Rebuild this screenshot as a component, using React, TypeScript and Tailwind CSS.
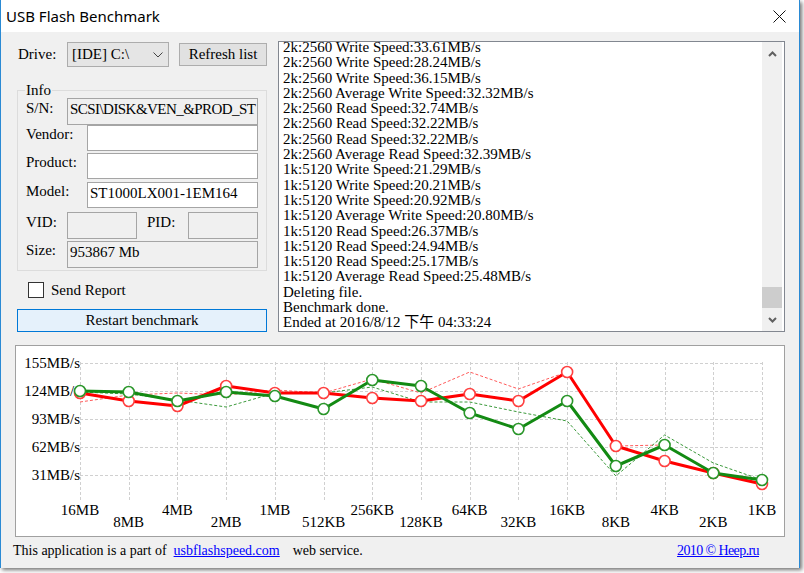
import React from "react";

const xs = Array.from({ length: 15 }, (_, i) => 80 + (i * 682) / 14);
const xLabels = ["16MB", "8MB", "4MB", "2MB", "1MB", "512KB", "256KB", "128KB", "64KB", "32KB", "16KB", "8KB", "4KB", "2KB", "1KB"];
const yTicks = [155, 124, 93, 62, 31];
const yOf = (v: number) => 503 - v * (140 / 155);

// pixel y of each point, read off the screenshot
const redSolid = [393, 401, 406, 386, 393, 393, 398, 401, 394, 401, 372, 446, 461, 473, 484];
const greenSolid = [391, 392, 401, 392, 396, 409, 380, 386, 413, 429, 401, 466, 445, 473, 480];
const redDash = [402, 395, 393, 395, 390, 393, 379, 393, 372, 389, 372, 446, 445, 473, 484];
const greenDash = [392, 394, 400, 407, 393, 393, 387, 402, 402, 412, 421, 476, 435, 463, 480];

const logLines = [
  "2k:2560 Write Speed:33.61MB/s",
  "2k:2560 Write Speed:28.24MB/s",
  "2k:2560 Write Speed:36.15MB/s",
  "2k:2560 Average Write Speed:32.32MB/s",
  "2k:2560 Read Speed:32.74MB/s",
  "2k:2560 Read Speed:32.22MB/s",
  "2k:2560 Read Speed:32.22MB/s",
  "2k:2560 Average Read Speed:32.39MB/s",
  "1k:5120 Write Speed:21.29MB/s",
  "1k:5120 Write Speed:20.21MB/s",
  "1k:5120 Write Speed:20.92MB/s",
  "1k:5120 Average Write Speed:20.80MB/s",
  "1k:5120 Read Speed:26.37MB/s",
  "1k:5120 Read Speed:24.94MB/s",
  "1k:5120 Read Speed:25.17MB/s",
  "1k:5120 Average Read Speed:25.48MB/s",
  "Deleting file.",
  "Benchmark done.",
  "Ended at 2016/8/12 下午 04:33:24",
];

function Chart() {
  const pts = (ys: number[]) => ys.map((y, i) => `${xs[i]},${y}`).join(" ");
  return (
    <svg width={768} height={190} viewBox="16 346 768 190" className="block">
      <rect x={16} y={346} width={768} height={190} fill="#ffffff" />
      {xs.map((x, i) => (
        <line key={i} x1={Math.round(x) + 0.5} x2={Math.round(x) + 0.5} y1={362} y2={502} stroke="#d0d0d0" strokeDasharray="3 2" />
      ))}
      {yTicks.map((v) => (
        <line key={v} x1={80} x2={762} y1={Math.round(yOf(v)) + 0.5} y2={Math.round(yOf(v)) + 0.5} stroke="#d0d0d0" strokeDasharray="3 2" />
      ))}
      {yTicks.map((v) => (
        <text key={v} x={80} y={yOf(v) + 5} textAnchor="end" fontFamily="'Liberation Serif', serif" fontSize={15} fill="#000">
          {v}MB/s
        </text>
      ))}
      {xLabels.map((l, i) => (
        <text key={l} x={xs[i]} y={i % 2 === 0 ? 515 : 527} textAnchor="middle" fontFamily="'Liberation Serif', serif" fontSize={15} fill="#000">
          {l}
        </text>
      ))}
      <polyline points={pts(redDash)} fill="none" stroke="#ff5a5a" strokeWidth={1} strokeDasharray="3 2" />
      <polyline points={pts(greenDash)} fill="none" stroke="#3c9a3c" strokeWidth={1} strokeDasharray="3 2" />
      <polyline points={pts(redSolid)} fill="none" stroke="#ff0000" strokeWidth={3} strokeLinejoin="round" />
      {redSolid.map((y, i) => (
        <circle key={i} cx={xs[i]} cy={y} r={5.5} fill="#fff" stroke="#ff4040" strokeWidth={1.6} />
      ))}
      <polyline points={pts(greenSolid)} fill="none" stroke="#138a13" strokeWidth={3} strokeLinejoin="round" />
      {greenSolid.map((y, i) => (
        <circle key={i} cx={xs[i]} cy={y} r={5.5} fill="#fff" stroke="#2a962a" strokeWidth={1.6} />
      ))}
    </svg>
  );
}

function Field({ w, gray, text, tight }: { w: string; gray?: boolean; text?: string; tight?: boolean }) {
  return (
    <div
      className={`${w} min-w-0 h-full border border-[#a5a5a5] pl-[2px] pt-[2px] leading-[17px] overflow-hidden whitespace-nowrap ${
        gray ? "bg-[#f0f0f0]" : "bg-white"
      } ${tight ? "tracking-[-0.55px]" : ""}`}
    >
      {text}
    </div>
  );
}

export default function App() {
  return (
    <div className="w-[804px] h-[573px] bg-white font-['Liberation_Serif',serif] text-[15px] text-black">
      <div className="w-[800px] h-[568px] border-x border-[#2a8ad4] bg-[#f0f0f0] flex flex-col shadow-[2px_2px_4px_rgba(0,0,0,0.55)]">
        {/* title bar */}
        <div className="h-[32px] bg-white flex items-center justify-between pl-[5px] pr-[13px]">
          <span className="font-['Noto_Sans',sans-serif] text-[15px]">USB Flash Benchmark</span>
          <svg width="13" height="13" viewBox="0 0 13 13">
            <path d="M0.5 0.5 L12.5 12.5 M12.5 0.5 L0.5 12.5" stroke="#111" strokeWidth="1" />
          </svg>
        </div>

        <div className="flex items-start pt-[9px] pl-[16px]">
          {/* left column */}
          <div className="w-[250px] shrink-0 flex flex-col">
            <div className="mt-[1px] flex items-center h-[25px]">
              <span className="w-[50px] pl-[1px]">Drive:</span>
              <div className="w-[102px] h-[25px] border border-[#acacac] bg-[#e5e5e5] flex items-center justify-between pl-[4px] pr-[5px]">
                <span>[IDE] C:\</span>
                <svg width="10" height="6" viewBox="0 0 10 6">
                  <path d="M0.5 0.5 L5 5 L9.5 0.5" fill="none" stroke="#444" strokeWidth="1" />
                </svg>
              </div>
              <div className="ml-[10px] w-[88px] h-[23px] border border-[#adadad] bg-[#e1e1e1] flex items-center justify-center">
                Refresh list
              </div>
            </div>

            <fieldset className="mt-[15px] w-[250px] min-w-0 border border-[#dcdcdc] pl-[7px] pr-[8px] pb-[2px]">
              <legend className="px-[1px] leading-[16px]">Info</legend>
              <div className="flex h-[27px] pl-[1px]">
                <span className="w-[41px] shrink-0 pt-[2px] leading-[17px]">S/N:</span>
                <Field w="flex-1" gray tight text={"SCSI\\DISK&VEN_&PROD_ST"} />
              </div>
              <div className="flex h-[26px] pl-[1px]">
                <span className="w-[61px] shrink-0 pt-[1px] leading-[17px]">Vendor:</span>
                <Field w="flex-1" />
              </div>
              <div className="flex h-[26px] mt-[2px] pl-[1px]">
                <span className="w-[61px] shrink-0 pt-[1px] leading-[17px]">Product:</span>
                <Field w="flex-1" />
              </div>
              <div className="flex h-[26px] mt-[3px] pl-[1px]">
                <span className="w-[61px] shrink-0 pt-[1px] leading-[17px]">Model:</span>
                <Field w="flex-1" text="ST1000LX001-1EM164" />
              </div>
              <div className="flex h-[27px] mt-[4px] pl-[1px]">
                <span className="w-[41px] shrink-0 pt-[2px] leading-[17px]">VID:</span>
                <Field w="w-[70px]" gray />
                <span className="w-[41px] shrink-0 ml-[10px] pt-[2px] leading-[17px]">PID:</span>
                <Field w="w-[70px]" gray />
              </div>
              <div className="flex h-[27px] mt-[2px] pl-[1px]">
                <span className="w-[41px] shrink-0 pt-[1px] leading-[17px]">Size:</span>
                <Field w="flex-1" gray text="953867 Mb" />
              </div>
            </fieldset>

            <div className="mt-[11px] ml-[11px] flex items-center h-[16px]">
              <div className="w-[16px] h-[16px] border border-[#333333] bg-white" />
              <span className="ml-[7px]">Send Report</span>
            </div>

            <div className="mt-[11px] w-[250px] h-[23px] border border-[#0078d7] bg-[#e5f1fb] flex items-center justify-center">
              Restart benchmark
            </div>
          </div>

          {/* log */}
          <div className="ml-[11px] w-[507px] h-[291px] border border-[#828790] bg-white flex">
            <div className="flex-1 min-w-0 pl-[4px] -mt-[2px] leading-[15.3px] overflow-hidden whitespace-nowrap font-['Liberation_Serif','Noto_Sans_CJK_TC',serif]">
              {logLines.map((l, i) => (
                <div key={i}>{l}</div>
              ))}
            </div>
            <div className="w-[20px] mr-[2px] bg-[#f0f0f0] flex flex-col">
              <div className="h-[24px] flex items-center justify-center">
                <svg width="9" height="6" viewBox="0 0 9 6">
                  <path d="M1 5 L4.5 1.5 L8 5" fill="none" stroke="#606060" strokeWidth="2" />
                </svg>
              </div>
              <div className="flex-1 flex flex-col justify-end">
                <div className="h-[21px] bg-[#cdcdcd]" />
              </div>
              <div className="h-[23px] flex items-center justify-center">
                <svg width="9" height="6" viewBox="0 0 9 6">
                  <path d="M1 1 L4.5 4.5 L8 1" fill="none" stroke="#606060" strokeWidth="2" />
                </svg>
              </div>
            </div>
          </div>
        </div>

        {/* chart */}
        <div className="mt-[13px] ml-[14px] w-[770px] h-[192px] border border-[#a0a0a0]">
          <Chart />
        </div>

        {/* footer */}
        <div className="h-[26px] flex items-center justify-between pl-[12px] pr-[40px] text-[14px]">
          <div className="flex items-center">
            <span>This application is a part of</span>
            <a className="ml-[7px] text-[#0000ff] underline">usbflashspeed.com</a>
            <span className="ml-[13px]">web service.</span>
          </div>
          <a className="text-[#0000ff] underline tracking-[-0.6px]">2010 © Heep.ru</a>
        </div>
      </div>
    </div>
  );
}
